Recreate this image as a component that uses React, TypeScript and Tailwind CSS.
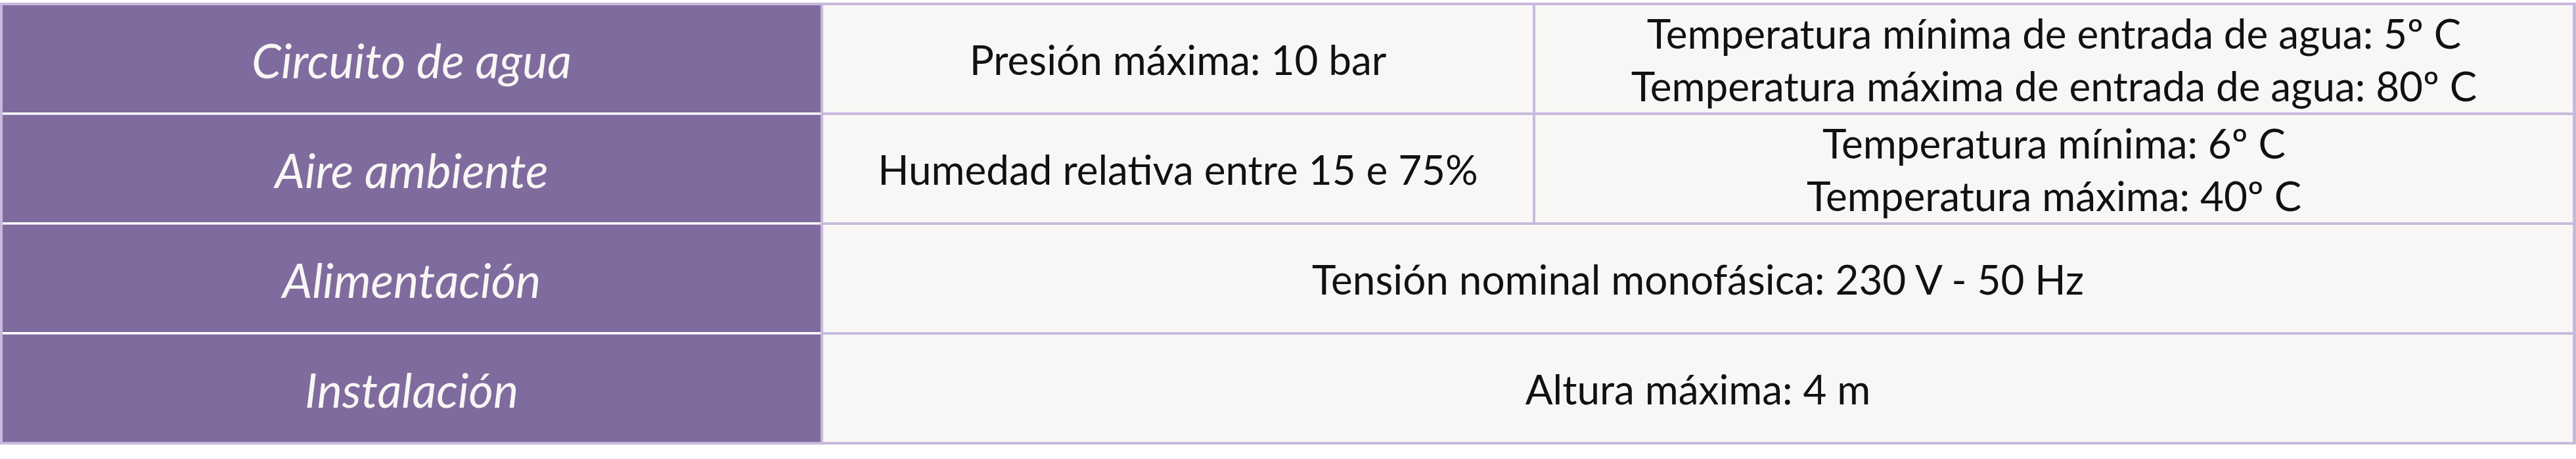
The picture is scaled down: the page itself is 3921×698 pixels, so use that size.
import React from "react";

const font = { fontFamily: "Lato, 'Noto Sans', sans-serif" };

function Head({ children, last }: { children: React.ReactNode; last?: boolean }) {
  return (
    <div
      className={
        "flex items-center justify-center bg-[#806b9f] text-[#f8f7f5] italic text-[72px] leading-none " +
        (last ? "" : "shadow-[0_3px_0_0_#ffffff]")
      }
    >
      <span className="mt-[2px]">{children}</span>
    </div>
  );
}

function Cell({ children, span }: { children: React.ReactNode; span?: boolean }) {
  return (
    <div
      className={
        "flex flex-col items-center justify-center bg-[#f8f7f5] text-[#111111] text-[62px] leading-[80px] text-center " +
        (span ? "col-span-2" : "")
      }
    >
      {children}
    </div>
  );
}

export default function App() {
  return (
    <div className="w-[3921px] h-[698px] bg-white pt-[4px]" style={font}>
      <div className="grid grid-cols-[1245px_1080px_1579px] grid-rows-[163px_163px_163px_163px] gap-[4px] bg-[#c8b9dc] border-t-[4px] border-b-[4px] border-l-[4px] border-r-[5px] border-[#c8b9dc]">
        <Head>Circuito de agua</Head>
        <Cell>Presión máxima: 10 bar</Cell>
        <Cell>
          <div>Temperatura mínima de entrada de agua: 5º C</div>
          <div>Temperatura máxima de entrada de agua: 80º C</div>
        </Cell>
        <Head>Aire ambiente</Head>
        <Cell>Humedad relativa entre 15 e 75%</Cell>
        <Cell>
          <div>Temperatura mínima: 6º C</div>
          <div>Temperatura máxima: 40º C</div>
        </Cell>
        <Head>Alimentación</Head>
        <Cell span>Tensión nominal monofásica: 230 V - 50 Hz</Cell>
        <Head last>Instalación</Head>
        <Cell span>Altura máxima: 4 m</Cell>
      </div>
    </div>
  );
}
